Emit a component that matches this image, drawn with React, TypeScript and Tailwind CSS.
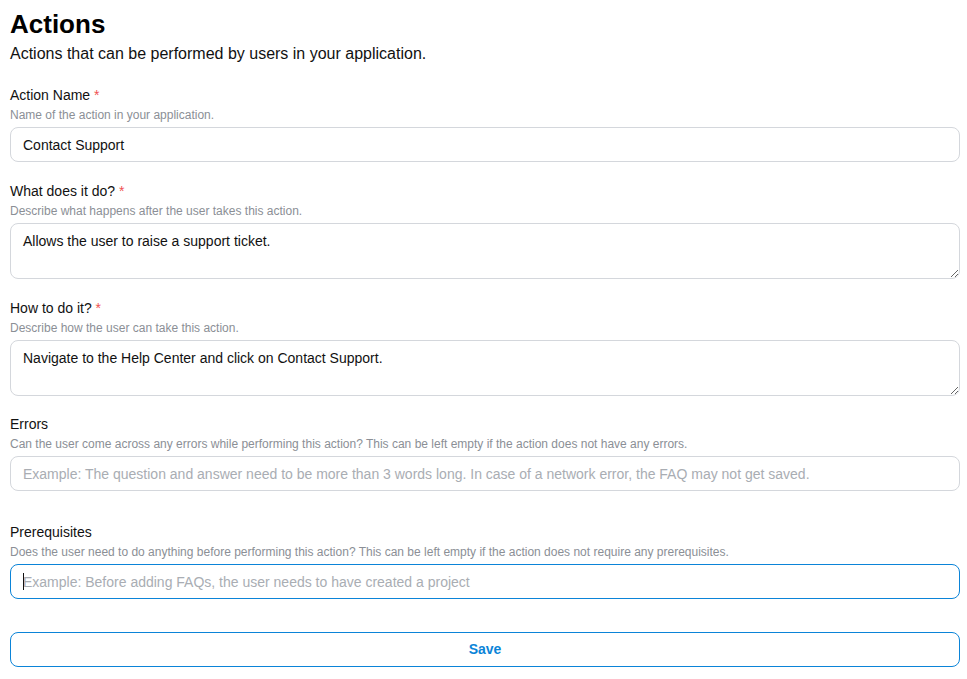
import { useState } from 'react';

const font = { fontFamily: '"Liberation Sans", Arial, sans-serif' };

function Label({ title, desc, required }: { title: string; desc: string; required?: boolean }) {
  return (
    <div className="mb-[4px]">
      <div className="text-[14px] leading-[18px] text-[#111]">
        {title}
        {required && <span className="text-[#f05252]"> *</span>}
      </div>
      <div className="text-[12px] leading-[16px] text-[#8b8f96] mt-[3px]">{desc}</div>
    </div>
  );
}

export default function App() {
  const [name, setName] = useState('Contact Support');
  const [what, setWhat] = useState('Allows the user to raise a support ticket.');
  const [how, setHow] = useState('Navigate to the Help Center and click on Contact Support.');
  const [errors, setErrors] = useState('');
  const [prereq, setPrereq] = useState('');

  const inputCls =
    'w-full h-[35px] px-[12px] rounded-[8px] border bg-white text-[14px] text-[#111] placeholder:text-[#a9adb3] outline-none block';
  const areaCls =
    'w-full h-[56px] px-[12px] pt-[8px] rounded-[8px] border border-[#d4d7dc] bg-white text-[14px] leading-[18px] text-[#111] outline-none resize-y block';

  return (
    <div className="bg-white min-h-screen pl-[10px] pr-[7px] pt-[8px] pb-[12px]" style={font}>
      <h1 className="text-[26px] leading-[32px] font-bold text-black">Actions</h1>
      <p className="text-[16px] leading-[20px] text-[#111] mt-[4px]">
        Actions that can be performed by users in your application.
      </p>

      <div className="mt-[22px]">
        <Label title="Action Name" desc="Name of the action in your application." required />
        <input className={inputCls + ' border-[#d4d7dc]'} value={name} onChange={(e) => setName(e.target.value)} />
      </div>

      <div className="mt-[20px]">
        <Label title="What does it do?" desc="Describe what happens after the user takes this action." required />
        <textarea className={areaCls} value={what} onChange={(e) => setWhat(e.target.value)} />
      </div>

      <div className="mt-[20px]">
        <Label title="How to do it?" desc="Describe how the user can take this action." required />
        <textarea className={areaCls} value={how} onChange={(e) => setHow(e.target.value)} />
      </div>

      <div className="mt-[19px]">
        <Label
          title="Errors"
          desc="Can the user come across any errors while performing this action? This can be left empty if the action does not have any errors."
        />
        <input
          className={inputCls + ' border-[#d4d7dc]'}
          value={errors}
          onChange={(e) => setErrors(e.target.value)}
          placeholder="Example: The question and answer need to be more than 3 words long. In case of a network error, the FAQ may not get saved."
        />
      </div>

      <div className="mt-[32px]">
        <Label
          title="Prerequisites"
          desc="Does the user need to do anything before performing this action? This can be left empty if the action does not require any prerequisites."
        />
        <div className="relative">
          <input
            className={inputCls + ' border-[#0b84d8]'}
            value={prereq}
            onChange={(e) => setPrereq(e.target.value)}
            placeholder="Example: Before adding FAQs, the user needs to have created a project"
          />
          {prereq === '' && (
            <span className="absolute left-[13px] top-[9px] w-px h-[17px] bg-[#111] pointer-events-none" />
          )}
        </div>
      </div>

      <button className="mt-[33px] w-full h-[35px] rounded-[8px] border border-[#0b84d8] bg-white text-[14px] font-bold text-[#0b84d8]">
        Save
      </button>
    </div>
  );
}
